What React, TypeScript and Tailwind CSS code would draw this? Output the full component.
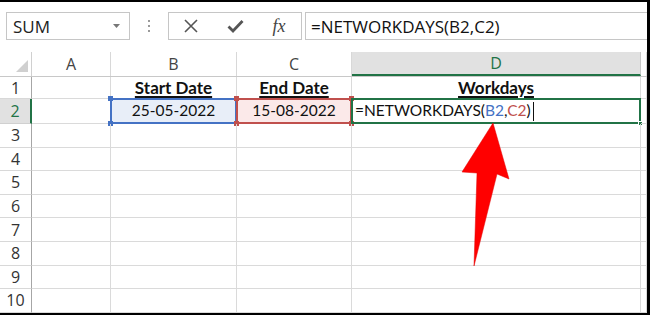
import React from "react";

const colW = [32, 79, 126, 115, 289, 6];
const rowH = [22, 25, 23.6, 23.6, 23.6, 23.6, 23.6, 23.6, 23.6, 23.6];
const letters = ["A", "B", "C", "D", ""];

const cellFont = { fontFamily: "Lato, 'Liberation Sans', sans-serif" };
const uiFont = { fontFamily: "'Open Sans', 'Noto Sans', sans-serif" };

function Handle({ className }: { className: string }) {
  return <div className={"absolute w-[5px] h-[5px] " + className} />;
}

export default function App() {
  return (
    <div className="relative w-[650px] h-[315px] overflow-hidden bg-white">
      <div className="w-[650px] h-[315px] border-t-2 border-r-[3px] border-b-2 border-black flex flex-col bg-white">
        {/* Toolbar */}
        <div className="h-[50px] flex items-start pt-[10px] pl-[6px] shrink-0" style={uiFont}>
          <div className="w-[124px] h-[28px] border border-[#c6c6c6] flex items-center justify-between pl-[6px] pr-[9px]">
            <span className="text-[17px] text-[#222] leading-none">SUM</span>
            <svg width="7" height="4" viewBox="0 0 7 4"><path d="M0 0 L7 0 L3.5 4 Z" fill="#777" /></svg>
          </div>
          <div className="w-[38px] h-[28px] flex flex-col items-center justify-center gap-[3px]">
            <div className="w-[2px] h-[2px] bg-[#9a9a9a]" />
            <div className="w-[2px] h-[2px] bg-[#9a9a9a]" />
            <div className="w-[2px] h-[2px] bg-[#9a9a9a]" />
          </div>
          <div className="w-[134px] h-[28px] border border-[#c6c6c6] flex items-center">
            <div className="w-[44px] flex justify-center">
              <svg width="14" height="14" viewBox="0 0 14 14"><path d="M1 1 L13 13 M13 1 L1 13" stroke="#555" strokeWidth="1.6" /></svg>
            </div>
            <div className="w-[44px] flex justify-center">
              <svg width="17" height="14" viewBox="0 0 17 14"><path d="M1.5 7.5 L6 12 L15.5 2" stroke="#555" strokeWidth="2.8" fill="none" /></svg>
            </div>
            <div className="w-[44px] flex justify-center">
              <span className="text-[18px] italic text-[#444] leading-none" style={{ fontFamily: "'Liberation Serif', serif" }}>fx</span>
            </div>
          </div>
          <div className="ml-[3px] flex-1 h-[28px] border border-r-0 border-[#c6c6c6] flex items-center pl-[5px]">
            <span className="text-[17px] text-[#111] leading-none">=NETWORKDAYS(B2,C2)</span>
          </div>
        </div>

        {/* Grid */}
        <div className="flex flex-col">
          {/* Column header */}
          <div className="flex h-[25px] border-b border-[#c8c8c8]" style={uiFont}>
            <div className="w-[32px] h-full border-r border-[#d0d0d0] relative">
              <svg className="absolute right-[3px] bottom-[4px]" width="12" height="12" viewBox="0 0 12 12"><path d="M12 0 L12 12 L0 12 Z" fill="#d0d0d0" /></svg>
            </div>
            {letters.map((l, i) => (
              <div
                key={i}
                style={{ width: colW[i + 1] }}
                className={
                  "h-full flex items-center justify-center text-[16px] border-r " +
                  (l === "D"
                    ? "bg-[#e1e1e1] text-[#217346] border-[#c8c8c8] border-b-2 border-b-[#217346]"
                    : "text-[#444] border-[#d8d8d8]")
                }
              >
                {l}
              </div>
            ))}
          </div>

          {rowH.map((h, r) => (
            <div key={r} className="flex" style={{ height: h }}>
              <div
                className={
                  "w-[32px] h-full flex items-center justify-center text-[16px] border-b " +
                  (r === 1
                    ? "bg-[#e1e1e1] text-[#217346] border-r-2 border-r-[#217346] border-b-[#d0d0d0]"
                    : "text-[#333] border-r border-r-[#a6a6a6] border-b-[#d8d8d8]")
                }
                style={uiFont}
              >
                {r + 1}
              </div>
              {colW.slice(1).map((w, c) => {
                let content: React.ReactNode = null;
                let extra = "";
                if (r === 0 && c === 1) content = <span className="font-bold underline underline-offset-[2px] decoration-[1.5px]">Start Date</span>;
                if (r === 0 && c === 2) content = <span className="font-bold underline underline-offset-[2px] decoration-[1.5px]">End Date</span>;
                if (r === 0 && c === 3) content = <span className="font-bold underline underline-offset-[2px] decoration-[1.5px]">Workdays</span>;
                if (r === 1 && c === 1) {
                  extra = "bg-[#e8eef8]";
                  content = (
                    <>
                      <span className="text-[15.5px]">25-05-2022</span>
                      <div className="absolute inset-[-1px] border-2 border-[#4472c4] pointer-events-none" />
                      <Handle className="bg-[#4472c4] left-[-3px] top-[-3px]" />
                      <Handle className="bg-[#4472c4] left-[-3px] bottom-[-3px]" />
                    </>
                  );
                }
                if (r === 1 && c === 2) {
                  extra = "bg-[#fbe9e9]";
                  content = (
                    <>
                      <span className="text-[15.5px]">15-08-2022</span>
                      <div className="absolute inset-[-1px] border-2 border-[#c0504d] pointer-events-none" />
                      <Handle className="bg-[#c0504d] left-[-3px] top-[-3px]" />
                      <Handle className="bg-[#c0504d] left-[-3px] bottom-[-3px]" />
                      <Handle className="bg-[#c0504d] right-[-3px] top-[-3px]" />
                      <Handle className="bg-[#c0504d] right-[-3px] bottom-[-3px]" />
                    </>
                  );
                }
                if (r === 1 && c === 3) {
                  extra = "justify-start pl-[3px]";
                  content = (
                    <>
                      <span className="text-[#111] text-[15.5px]">
                        =NETWORKDAYS(<span className="text-[#4472c4]">B2</span>,<span className="text-[#c0504d]">C2</span>)
                      </span>
                      <div className="w-[1px] h-[19px] bg-[#111] ml-[2px]" />
                      <div className="absolute inset-[-1px] border-2 border-[#217346] pointer-events-none" />
                      <div className="absolute w-[5px] h-[5px] bg-[#217346] right-[-3px] bottom-[-3px] border border-white" />
                    </>
                  );
                }
                return (
                  <div
                    key={c}
                    style={{ width: w, ...cellFont }}
                    className={
                      "relative h-full flex items-center justify-center text-[17px] text-[#111] border-r border-b border-[#dadada] " +
                      extra
                    }
                  >
                    {content}
                  </div>
                );
              })}
            </div>
          ))}
        </div>
      </div>

      {/* Red arrow */}
      <svg className="absolute left-0 top-0 pointer-events-none" width="650" height="315" viewBox="0 0 650 315">
        <polygon points="493,123 509,179 497,174 474,266 477,173 462,172" fill="#ff0000" stroke="#e00000" strokeWidth="0.5" strokeLinejoin="round" />
      </svg>
    </div>
  );
}
